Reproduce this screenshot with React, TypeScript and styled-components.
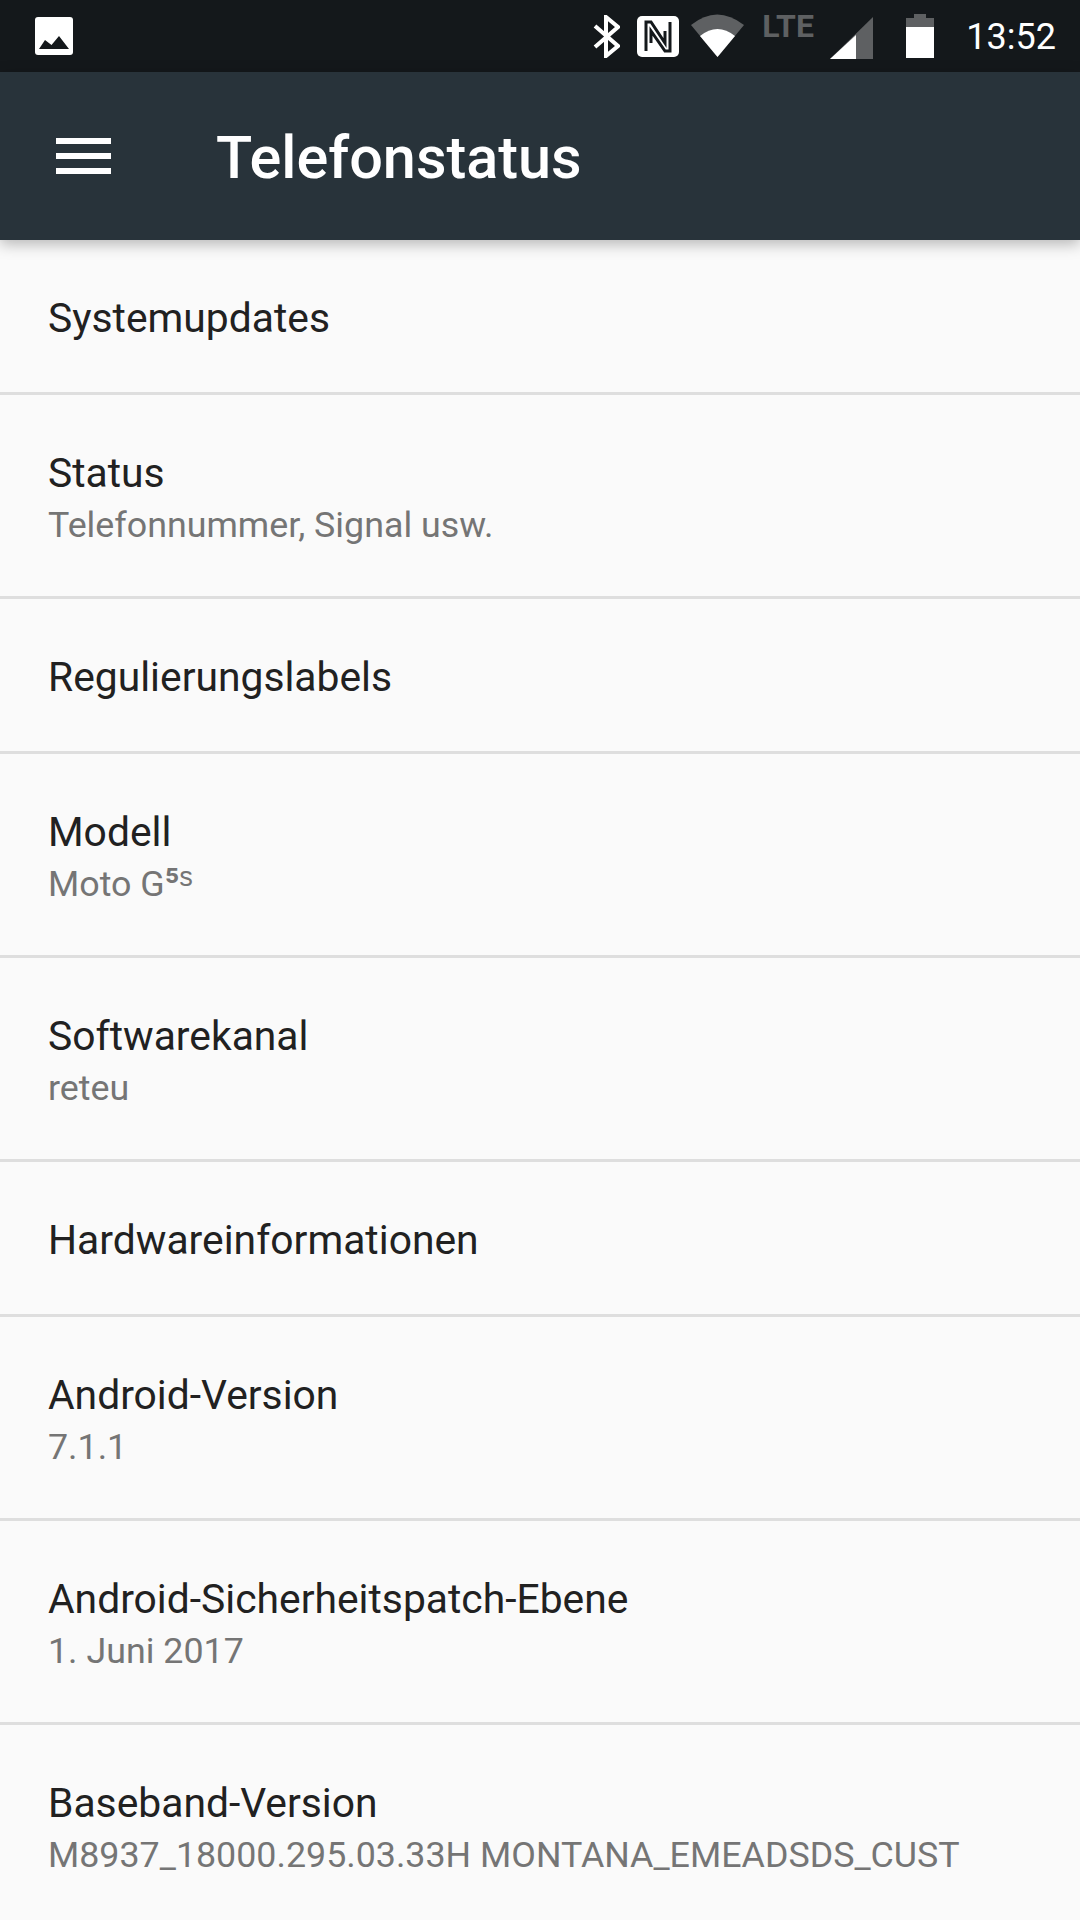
import React from 'react';
import styled, { createGlobalStyle } from 'styled-components';

const GlobalStyle = createGlobalStyle`
  html, body {
    margin: 0;
    padding: 0;
    background: #fafafa;
    font-family: Roboto, "Liberation Sans", sans-serif;
  }
`;

const Page = styled.div`
  width: 1080px;
  height: 1920px;
  display: flex;
  flex-direction: column;
  overflow: hidden;
  background: #fafafa;
`;

const StatusBar = styled.div`
  height: 72px;
  flex: none;
  display: flex;
  align-items: flex-start;
  background: #14181b;
  padding-left: 35px;
  box-sizing: border-box;
`;

const StatusIcons = styled.div`
  margin-left: auto;
  display: flex;
  align-items: flex-start;
`;

const Glyph = styled.svg<{ $left: number; $top: number }>`
  display: block;
  flex: none;
  margin-left: ${p => p.$left}px;
  margin-top: ${p => p.$top}px;
`;

const Lte = styled.span`
  margin-left: 18px;
  margin-top: 9px;
  width: 54px;
  font-size: 32px;
  line-height: 35px;
  font-weight: 700;
  color: #5e6062;
`;

const Clock = styled.span`
  margin-left: 32px;
  margin-right: 24px;
  margin-top: 16px;
  font-size: 36px;
  line-height: 42px;
  color: #fff;
`;

const Toolbar = styled.header`
  position: relative;
  z-index: 1;
  height: 168px;
  flex: none;
  display: flex;
  align-items: center;
  background: #28333a;
  box-shadow: 0 4px 14px rgba(0, 0, 0, 0.28);
  padding-left: 56px;
  box-sizing: border-box;
`;

const MenuIcon = styled.div`
  width: 55px;
  height: 36px;
  margin-top: -1px;
  display: flex;
  flex-direction: column;
  justify-content: space-between;
`;

const MenuBar = styled.span`
  display: block;
  height: 6px;
  background: #fff;
`;

const Title = styled.h1`
  margin: 4px 0 0 105px;
  font-size: 59.4px;
  line-height: 66px;
  font-weight: 500;
  color: #fff;
`;

const List = styled.main`
  flex: 1;
  display: flex;
  flex-direction: column;
`;

const Row = styled.div<{ $double: boolean }>`
  height: ${p => (p.$double ? 204 : 155)}px;
  flex: none;
  box-sizing: border-box;
  display: flex;
  flex-direction: column;
  justify-content: center;
  padding: ${p => (p.$double ? 5 : 3)}px 48px 0;
  border-bottom: 3px solid #dedede;
  &:last-child {
    border-bottom-color: transparent;
  }
`;

const Name = styled.div`
  font-size: 40.8px;
  line-height: 54px;
  color: #212121;
`;

const Detail = styled.div`
  font-size: 35.8px;
  line-height: 51px;
  color: #757575;
`;

const Super = styled.span`
  font-size: 39.5px;
  font-weight: 500;
  line-height: 0;
`;

const rows: { name: string; detail?: React.ReactNode }[] = [
  { name: 'Systemupdates' },
  { name: 'Status', detail: 'Telefonnummer, Signal usw.' },
  { name: 'Regulierungslabels' },
  { name: 'Modell', detail: <>Moto G<Super>⁵ˢ</Super></> },
  { name: 'Softwarekanal', detail: 'reteu' },
  { name: 'Hardwareinformationen' },
  { name: 'Android-Version', detail: '7.1.1' },
  { name: 'Android-Sicherheitspatch-Ebene', detail: '1. Juni 2017' },
  { name: 'Baseband-Version', detail: 'M8937_18000.295.03.33H MONTANA_EMEADSDS_CUST' },
];

export default function App() {
  return (
    <Page>
      <GlobalStyle />
      <StatusBar>
        <Glyph $left={0} $top={17} width="38" height="38" viewBox="0 0 38 38">
          <rect width="38" height="38" rx="3" fill="#fff" />
          <path d="M4 32 L10 23 L16.5 28 L24 19 L34 32 Z" fill="#14181b" />
        </Glyph>
        <StatusIcons>
          <Glyph $left={0} $top={15} width="27" height="43" viewBox="0 0 27 43">
            <path d="M2 11 L25 31 L13 41 L13 2 L25 12 L2 32" fill="none" stroke="#fff" strokeWidth="4" />
          </Glyph>
          <Glyph $left={17} $top={16} width="42" height="41" viewBox="0 0 42 41">
            <rect width="42" height="41" rx="5" fill="#fff" />
            <path d="M9 35 V6 H14 L28 27 V15" fill="none" stroke="#14181b" strokeWidth="3" />
            <path d="M33 6 V35 H28 L14 15 V27" fill="none" stroke="#14181b" strokeWidth="3" />
          </Glyph>
          <Glyph $left={12} $top={14} width="53" height="43" viewBox="0 0 53 43">
            <path d="M0 11 Q26 -10 53 11 L26.5 43 Z" fill="#5e6062" />
            <path d="M9 22 Q26.5 8 44 22 L26.5 43 Z" fill="#fff" />
          </Glyph>
          <Lte>LTE</Lte>
          <Glyph $left={14} $top={17} width="43" height="42" viewBox="0 0 43 42">
            <path d="M43 0 V42 H0 Z" fill="#5e6062" />
            <path d="M26 18 V42 H0 Z" fill="#fff" />
          </Glyph>
          <Glyph $left={33} $top={14} width="28" height="44" viewBox="0 0 28 44">
            <path d="M8 0 H20 V4 H28 V14 H0 V4 H8 Z" fill="#5e6062" />
            <rect y="13" width="28" height="31" fill="#fff" />
          </Glyph>
          <Clock>13:52</Clock>
        </StatusIcons>
      </StatusBar>
      <Toolbar>
        <MenuIcon>
          <MenuBar />
          <MenuBar />
          <MenuBar />
        </MenuIcon>
        <Title>Telefonstatus</Title>
      </Toolbar>
      <List>
        {rows.map(row => (
          <Row key={row.name} $double={Boolean(row.detail)}>
            <Name>{row.name}</Name>
            {row.detail && <Detail>{row.detail}</Detail>}
          </Row>
        ))}
      </List>
    </Page>
  );
}
